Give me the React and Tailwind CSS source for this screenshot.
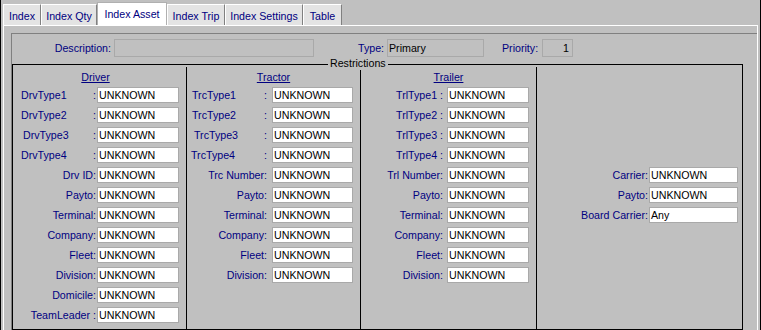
import React from 'react';

const tabs = [
  { name: 'Index', w: 'w-[38px]' },
  { name: 'Index Qty', w: 'w-[56px]' },
  { name: 'Index Asset', w: 'w-[70px]', active: true },
  { name: 'Index Trip', w: 'w-[58px]' },
  { name: 'Index Settings', w: 'w-[78px]' },
  { name: 'Table', w: 'w-[39px]' },
];

const INPUT = 'h-[16px] bg-white border border-[#a9a9a9] pl-[1px] text-black leading-[14px] whitespace-nowrap overflow-hidden';

function Row({ children, w, value = 'UNKNOWN' }) {
  return (
    <div className="flex items-center h-[16px] mb-[4px]">
      {children}
      <div className={`${INPUT} ${w}`}>{value}</div>
    </div>
  );
}

function Header({ text, cls = '' }) {
  return (
    <div className={`h-[20px] flex items-center justify-center ${cls}`}>
      <span className="underline text-[#000080]">{text}</span>
    </div>
  );
}

const driverTypes = [
  { l: 'DrvType1', pl: 'pl-[8px]' },
  { l: 'DrvType2', pl: 'pl-[8px]' },
  { l: 'DrvType3', pl: 'pl-[10px]' },
  { l: 'DrvType4', pl: 'pl-[8px]' },
];
const driverRest = ['Drv ID:', 'Payto:', 'Terminal:', 'Company:', 'Fleet:', 'Division:', 'Domicile:', 'TeamLeader :'];

const tractorTypes = [
  { l: 'TrcType1', pl: 'pl-[5px]' },
  { l: 'TrcType2', pl: 'pl-[5px]' },
  { l: 'TrcType3', pl: 'pl-[7px]' },
  { l: 'TrcType4', pl: 'pl-[4px]' },
];
const tractorRest = ['Trc Number:', 'Payto:', 'Terminal:', 'Company:', 'Fleet:', 'Division:'];

const trailerRows = ['TrlType1 :', 'TrlType2 :', 'TrlType3 :', 'TrlType4 :', 'Trl Number:', 'Payto:', 'Terminal:', 'Company:', 'Fleet:', 'Division:'];

const carrierRows = [
  { l: 'Carrier:', v: 'UNKNOWN' },
  { l: 'Payto:', v: 'UNKNOWN' },
  { l: 'Board Carrier:', v: 'Any' },
];

export default function App() {
  return (
    <div
      className="w-[761px] h-[330px] overflow-hidden bg-[#c0c0c0] border-x border-black text-[10.67px] leading-[14px] text-[#000080]"
      style={{ fontFamily: '"Liberation Sans", Arial, sans-serif' }}
    >
      {/* tab strip */}
      <div className="h-[25px] flex items-end pl-[2px]">
        {tabs.map((t) =>
          t.active ? (
            <div key={t.name} className={`${t.w} h-[23px] bg-white border-t border-l border-r border-[#b0b0b0] flex items-center justify-center`}>
              {t.name}
            </div>
          ) : (
            <div key={t.name} className={`${t.w} h-[21px] bg-[#e3e3e3] border-t border-l border-white border-r border-r-[#808080] flex items-center justify-center pt-[1px]`}>
              {t.name}
            </div>
          )
        )}
      </div>

      {/* panel */}
      <div className="mx-[2px] h-[305px] border-t border-l border-r border-white">
        <div className="mt-[7px] ml-[7px] h-[300px] border-t border-l border-[#808080]">
          {/* description row */}
          <div className="mt-[5px] h-[18px] flex items-center">
            <div className="w-[102px] text-right pr-[3px]">Description:</div>
            <div className="w-[200px] h-[18px] border border-[#a9a9a9]" />
            <div className="ml-[44px] w-[29px]">Type:</div>
            <div className="w-[97px] h-[18px] border border-[#a9a9a9] pl-[1px] text-black leading-[16px]">Primary</div>
            <div className="ml-[18px] w-[40px]">Priority:</div>
            <div className="w-[31px] h-[18px] border border-[#a9a9a9] pr-[3px] text-right text-black leading-[16px]">1</div>
          </div>

          {/* restrictions frame */}
          <div className="relative mt-[7px] w-[731px] h-[266px] border border-black flex">
            <div className="absolute left-[315px] top-[-8px] h-[13px] leading-[13px] px-[2px] bg-[#c0c0c0] text-black">Restrictions</div>

            {/* driver */}
            <div className="w-[174px] mt-[2px] border-r border-black flex flex-col">
              <Header text="Driver" cls="pr-[8px]" />
              {driverTypes.map((d) => (
                <Row key={d.l} w="w-[82px]">
                  <div className={`w-[84px] flex justify-between pr-[1px] ${d.pl}`}>
                    <span>{d.l}</span>
                    <span>:</span>
                  </div>
                </Row>
              ))}
              {driverRest.map((l) => (
                <Row key={l} w="w-[82px]">
                  <div className="w-[84px] text-right pr-[1px] whitespace-nowrap">{l}</div>
                </Row>
              ))}
            </div>

            {/* tractor */}
            <div className="w-[174px] mt-[2px] border-r border-black flex flex-col">
              <Header text="Tractor" />
              {tractorTypes.map((d) => (
                <Row key={d.l} w="w-[81px]">
                  <div className={`w-[85px] flex justify-between pr-[5px] ${d.pl}`}>
                    <span>{d.l}</span>
                    <span>:</span>
                  </div>
                </Row>
              ))}
              {tractorRest.map((l) => (
                <Row key={l} w="w-[81px]">
                  <div className="w-[85px] text-right pr-[5px] whitespace-nowrap">{l}</div>
                </Row>
              ))}
            </div>

            {/* trailer */}
            <div className="w-[176px] mt-[2px] border-r border-black flex flex-col">
              <Header text="Trailer" />
              {trailerRows.map((l) => (
                <Row key={l} w="w-[82px]">
                  <div className="w-[86px] text-right pr-[4px] whitespace-nowrap">{l}</div>
                </Row>
              ))}
            </div>

            {/* carrier */}
            <div className="flex-1 mt-[2px] pt-[100px] flex flex-col">
              {carrierRows.map((r) => (
                <Row key={r.l} w="w-[89px]" value={r.v}>
                  <div className="w-[112px] text-right pr-[1px] whitespace-nowrap">{r.l}</div>
                </Row>
              ))}
            </div>
          </div>
        </div>
      </div>
    </div>
  );
}
